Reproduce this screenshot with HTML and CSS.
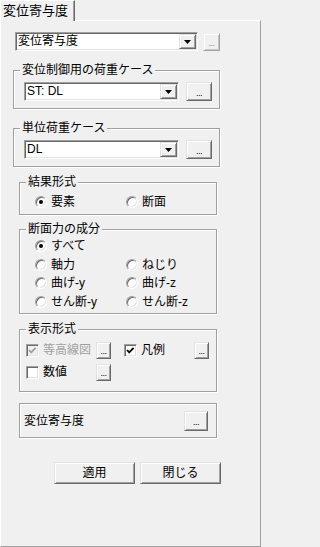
FILE: index.html
```html
<!DOCTYPE html>
<html lang="ja">
<head>
<meta charset="utf-8">
<title>変位寄与度</title>
<link rel="stylesheet" href="styles.css">
</head>
<body>
<div class="tabbar"><div class="tab">変位寄与度</div></div>
<div class="panel">
  <div class="toprow">
    <div class="combo combo-top"><span class="combo-text">変位寄与度</span><span class="drop"><svg width="7" height="4" viewBox="0 0 7 4"><polygon points="0,0 7,0 3.5,4" fill="#000"/></svg></span></div>
    <div class="btn dots dots-top">...</div>
  </div>

  <div class="group g-wide g1">
    <div class="gtitle">変位制御用の荷重ケース</div>
    <div class="comborow">
      <div class="combo combo-in"><span class="combo-text">ST: DL</span><span class="drop"><svg width="7" height="4" viewBox="0 0 7 4"><polygon points="0,0 7,0 3.5,4" fill="#000"/></svg></span></div>
      <div class="btn dots dots-in">...</div>
    </div>
  </div>

  <div class="group g-wide g2">
    <div class="gtitle">単位荷重ケース</div>
    <div class="comborow">
      <div class="combo combo-in"><span class="combo-text">DL</span><span class="drop"><svg width="7" height="4" viewBox="0 0 7 4"><polygon points="0,0 7,0 3.5,4" fill="#000"/></svg></span></div>
      <div class="btn dots dots-in">...</div>
    </div>
  </div>

  <div class="group g-narrow g3">
    <div class="gtitle">結果形式</div>
    <div class="radiogrid">
      <label class="opt"><span class="radio checked"></span>要素</label>
      <label class="opt"><span class="radio"></span>断面</label>
    </div>
  </div>

  <div class="group g-narrow g4">
    <div class="gtitle">断面力の成分</div>
    <div class="radiogrid rows4">
      <label class="opt"><span class="radio checked"></span>すべて</label>
      <span></span>
      <label class="opt"><span class="radio"></span>軸力</label>
      <label class="opt"><span class="radio"></span>ねじり</label>
      <label class="opt"><span class="radio"></span>曲げ-y</label>
      <label class="opt"><span class="radio"></span>曲げ-z</label>
      <label class="opt"><span class="radio"></span>せん断-y</label>
      <label class="opt"><span class="radio"></span>せん断-z</label>
    </div>
  </div>

  <div class="group g-narrow g5">
    <div class="gtitle">表示形式</div>
    <div class="checkgrid">
      <div class="chk-cell">
        <span class="checkbox disabled"><svg width="9" height="9" viewBox="0 0 9 9"><polyline points="1,4 3.2,6.4 7.6,1.8" fill="none" stroke="#a0a0a0" stroke-width="1.8"/></svg></span>
        <span class="chk-label disabled-text">等高線図</span>
        <div class="btn dots dots-small">...</div>
      </div>
      <div class="chk-cell">
        <span class="checkbox"><svg width="9" height="9" viewBox="0 0 9 9"><polyline points="1,4 3.2,6.4 7.6,1.8" fill="none" stroke="#000" stroke-width="1.8"/></svg></span>
        <span class="chk-label">凡例</span>
        <div class="btn dots dots-small">...</div>
      </div>
      <div class="chk-cell">
        <span class="checkbox"></span>
        <span class="chk-label">数値</span>
        <div class="btn dots dots-small">...</div>
      </div>
    </div>
  </div>

  <div class="group g-narrow frame">
    <span class="frame-text">変位寄与度</span>
    <div class="btn dots dots-frame">...</div>
  </div>

  <div class="actions">
    <div class="btn action">適用</div>
    <div class="btn action">閉じる</div>
  </div>
</div>
</body>
</html>
```

FILE: styles.css
```css
* {
  box-sizing: border-box;
}

html,
body {
  margin: 0;
  padding: 0;
}

body {
  width: 263px;
  height: 547px;
  overflow: hidden;
  background: #f0f0f0;
  color: #000;
  font-family: "Liberation Sans", "Noto Sans CJK JP", sans-serif;
  font-size: 12px;
  line-height: 14px;
}

/* tab header */
.tabbar {
  height: 20px;
  display: flex;
}

.tab {
  position: relative;
  z-index: 1;
  width: 75px;
  height: 21px;
  margin-bottom: -1px;
  padding-left: 2px;
  background: #f0f0f0;
  border-left: 1px solid #fff;
  border-top: 1px solid #fff;
  border-right: 1px solid #696969;
  box-shadow: inset -1px 0 0 #a0a0a0;
  font-size: 13px;
  line-height: 19px;
}

.panel {
  width: 261px;
  height: 527px;
  border-top: 1px solid #fff;
  border-left: 1px solid #fff;
  border-right: 1px solid #a0a0a0;
  border-bottom: 1px solid #a0a0a0;
  background: #f0f0f0;
}

/* combo boxes */
.toprow {
  display: flex;
  align-items: center;
  height: 19px;
  margin: 11px 0 0 14px;
  gap: 5px;
}

.combo {
  display: flex;
  align-items: stretch;
  height: 19px;
  background: #fff;
  border: 1px solid;
  border-color: #a0a0a0 #fff #fff #a0a0a0;
  box-shadow: inset 1px 1px 0 #696969, inset -1px -1px 0 #e3e3e3;
  padding: 1px;
}

.combo-top {
  width: 183px;
}

.combo-in {
  width: 155px;
}

.combo-text {
  flex: 1;
  padding-left: 1px;
  line-height: 15px;
  white-space: nowrap;
  overflow: hidden;
}

.drop {
  width: 17px;
  display: flex;
  align-items: center;
  justify-content: center;
  background: #f0f0f0;
  border: 1px solid;
  border-color: #e3e3e3 #696969 #696969 #e3e3e3;
  box-shadow: inset 1px 1px 0 #fff, inset -1px -1px 0 #a0a0a0;
}

.drop svg {
  display: block;
}

/* push buttons */
.btn {
  display: flex;
  align-items: center;
  justify-content: center;
  background: #f0f0f0;
  border: 1px solid;
  border-color: #e3e3e3 #696969 #696969 #e3e3e3;
  box-shadow: inset 1px 1px 0 #fff, inset -1px -1px 0 #a0a0a0;
}

.dots {
  font-size: 9px;
  line-height: 9px;
  padding-top: 3px;
  letter-spacing: -0.5px;
}

.dots-top {
  width: 17px;
  height: 18px;
  color: #8a8a8a;
  border-color: #f0f0f0 #a0a0a0 #a0a0a0 #f0f0f0;
  box-shadow: inset 1px 1px 0 #fff, inset -1px -1px 0 #c8c8c8;
}

.dots-in {
  width: 26px;
  height: 19px;
}

.dots-small {
  width: 15px;
  height: 17px;
}

.dots-frame {
  width: 24px;
  height: 20px;
  margin-left: auto;
}

/* group boxes */
.group {
  border: 1px solid #a0a0a0;
  box-shadow: 1px 1px 0 #fff, inset 1px 1px 0 #fff;
}

.gtitle {
  display: table;
  margin: -8px 0 0 6px;
  padding: 0 2px;
  background: #f0f0f0;
  line-height: 14px;
  white-space: nowrap;
}

.g-wide {
  width: 207px;
  margin-left: 12px;
  padding-bottom: 7px;
}

.g1 {
  margin-top: 19px;
}

.g2 {
  margin-top: 19px;
}

.comborow {
  display: flex;
  align-items: center;
  gap: 7px;
  margin: 5px 0 0 10px;
}

.g-narrow {
  width: 198px;
  margin-left: 18px;
}

.g3 {
  margin-top: 15px;
  padding-bottom: 3px;
}

.g4 {
  margin-top: 14px;
  padding-bottom: 2px;
}

.g5 {
  margin-top: 15px;
  padding-bottom: 9px;
}

/* radio buttons */
.radiogrid {
  display: grid;
  grid-template-columns: 91px 1fr;
  grid-auto-rows: 18px;
  margin-top: 4px;
  padding-left: 15px;
}

.rows4 {
  margin-top: 1px;
  grid-auto-rows: 18.5px;
}

.opt {
  display: flex;
  align-items: center;
  gap: 4px;
  white-space: nowrap;
}

.radio {
  position: relative;
  flex: none;
  width: 12px;
  height: 12px;
  border-radius: 50%;
  background: #fff;
  border: 1px solid;
  border-color: #a0a0a0 #fff #fff #a0a0a0;
  box-shadow: inset 1px 1px 0 #696969, inset -1px -1px 0 #e3e3e3;
}

.radio.checked::after {
  content: "";
  position: absolute;
  left: 3px;
  top: 3px;
  width: 4px;
  height: 4px;
  border-radius: 50%;
  background: #000;
}

/* check boxes */
.checkgrid {
  display: grid;
  grid-template-columns: 98px 1fr;
  grid-template-rows: 20px 20px;
  row-gap: 2px;
  margin-top: 4px;
  padding-left: 6px;
}

.chk-cell {
  display: flex;
  align-items: center;
}

.checkbox {
  flex: none;
  display: flex;
  align-items: center;
  justify-content: center;
  width: 13px;
  height: 13px;
  margin-right: 4px;
  background: #fff;
  border: 1px solid;
  border-color: #a0a0a0 #fff #fff #a0a0a0;
  box-shadow: inset 1px 1px 0 #696969, inset -1px -1px 0 #e3e3e3;
}

.checkbox.disabled {
  background: #f0f0f0;
}

.checkbox svg {
  display: block;
}

.chk-label {
  width: 53px;
  white-space: nowrap;
}

.disabled-text {
  color: #a0a0a0;
}

/* plain frame */
.frame {
  display: flex;
  align-items: center;
  height: 35px;
  margin-top: 11px;
  padding: 0 8px 0 4px;
}

/* bottom buttons */
.actions {
  display: flex;
  gap: 5px;
  margin: 24px 0 0 53px;
}

.action {
  width: 81px;
  height: 22px;
}
```
